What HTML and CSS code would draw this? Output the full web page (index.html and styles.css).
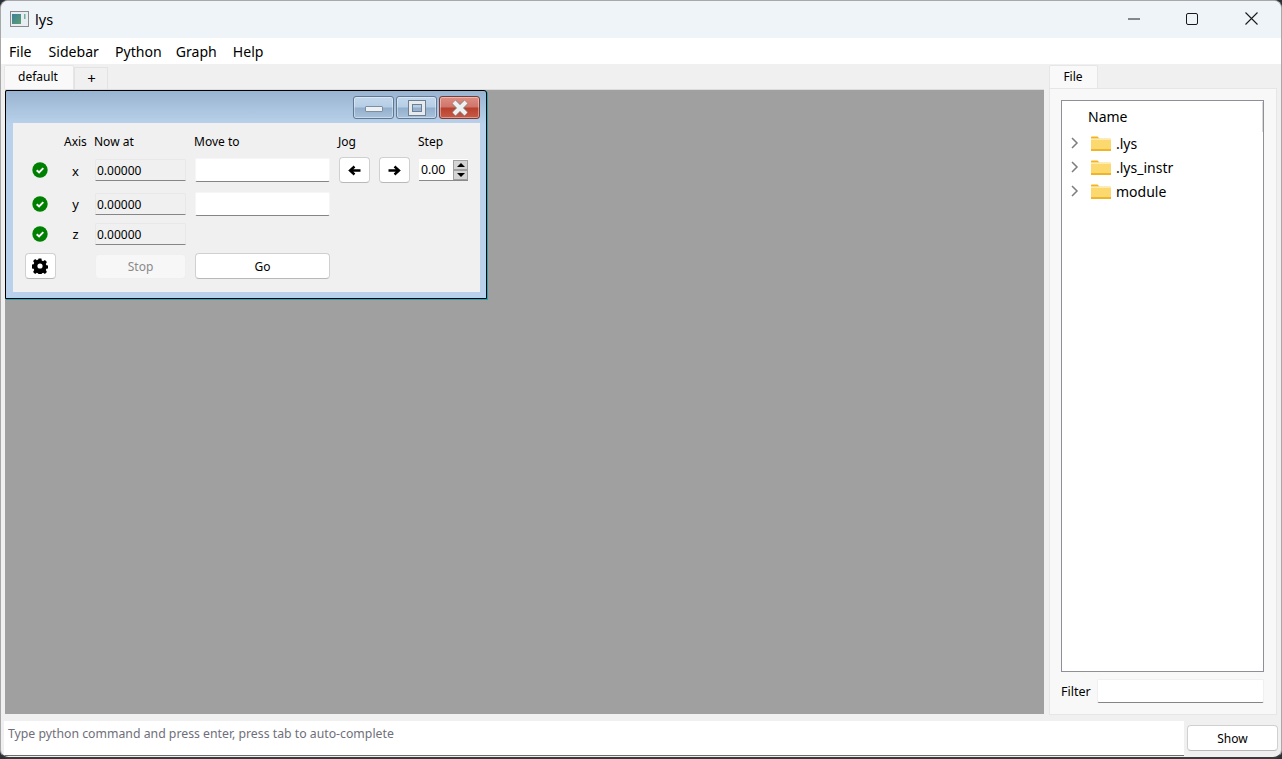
FILE: index.html
```html
<!DOCTYPE html>
<html lang="en">
<head>
<meta charset="utf-8">
<title>lys</title>
<link rel="stylesheet" href="styles.css">
</head>
<body>
<svg class="defs" width="0" height="0">
  <symbol id="ok" viewBox="0 0 16 16"><circle cx="8" cy="8" r="7.7" fill="#008000"/><path d="M4.7 8.200l2.400 2.300 4.200-4.400" fill="none" stroke="#fff" stroke-width="1.900"/></symbol>
  <symbol id="folder" viewBox="0 0 20 15"><path d="M0 1.500Q0 .5 1 .5h5.500l2 2H0z" fill="#f5b21c"/><path d="M0 2.500h19q1 0 1 1V14H0z" fill="#fcd96f"/><path d="M0 3h20v1H0z" fill="#fdeab0"/><path d="M0 13h20v2H0z" fill="#f0b429"/></symbol>
  <symbol id="chev" viewBox="0 0 8 12"><path d="M1 1l5 5-5 5" fill="none" stroke="#7d7d7d" stroke-width="1.500"/></symbol>
</svg>
<div class="app">
  <header class="titlebar">
    <svg class="appicon" width="19" height="16" viewBox="0 0 19 16"><rect x=".5" y=".5" width="18" height="15" fill="#e8edf2" stroke="#8a8a8a"/><defs><linearGradient id="lg" x1="0" y1="0" x2="1" y2="1"><stop offset="0" stop-color="#3d7fa0"/><stop offset="1" stop-color="#5ba06c"/></linearGradient></defs><rect x="2" y="3" width="9" height="10" fill="url(#lg)"/><rect x="14" y="3" width="1.500" height="5" fill="#6fb0a0"/></svg>
    <span class="apptitle">lys</span>
    <div class="wincontrols">
      <svg width="12" height="2" viewBox="0 0 12 2" class="wc-min"><path d="M0 1h12" stroke="#1a1a1a" stroke-width="1"/></svg>
      <svg width="12" height="12" viewBox="0 0 12 12" class="wc-max"><rect x=".5" y=".5" width="11" height="11" rx="1.500" fill="none" stroke="#1a1a1a"/></svg>
      <svg width="13" height="13" viewBox="0 0 13 13" class="wc-close"><path d="M.5.500l12 12M12.500.500l-12 12" stroke="#1a1a1a" stroke-width="1.100"/></svg>
    </div>
  </header>
  <nav class="menubar">
    <span class="menu m-file">File</span><span class="menu m-side">Sidebar</span><span class="menu m-py">Python</span><span class="menu m-graph">Graph</span><span class="menu m-help">Help</span>
  </nav>
  <main class="main">
    <section class="leftcol">
      <div class="tabs">
        <div class="tab tab-on">default</div>
        <div class="tab tab-plus">+</div>
      </div>
      <div class="mdi">
        <div class="subwin">
          <div class="subtitle">
            <div class="capbtn"><span class="glyph-min"></span></div>
            <div class="capbtn"><span class="glyph-max"></span></div>
            <div class="capbtn capclose"><svg width="20" height="16" viewBox="0 0 20 16"><path d="M4 2l12 12M16 2L4 14" stroke="#8a8a8a" stroke-width="5.500"/><path d="M4 2l12 12M16 2L4 14" stroke="#f0f0f0" stroke-width="4"/></svg></div>
          </div>
          <div class="subbody">
            <div class="grid">
              <div></div><div class="hd">Axis</div><div class="hd hd-now">Now at</div><div class="hd hd-move">Move to</div><div class="hd hd-jog">Jog</div><div class="hd">Step</div>

              <div class="cell c24 center"><svg class="okicon" width="16" height="16"><use href="#ok"/></svg></div>
              <div class="cell c24 center axis axis-x">x</div>
              <div class="cell c24"><div class="readout">0.00000</div></div>
              <div class="cell c24"><div class="edit"></div></div>
              <div class="cell c24 jog">
                <button class="btn jogbtn"><svg width="13" height="11" viewBox="0 0 13 11"><path d="M12.500 5.500H3.500M6.500 1.500L2 5.500 6.500 9.500" fill="none" stroke="#000" stroke-width="2.400"/></svg></button>
                <button class="btn jogbtn"><svg width="13" height="11" viewBox="0 0 13 11"><path d="M.5 5.500h9M6.500 1.500L11 5.500 6.500 9.500" fill="none" stroke="#000" stroke-width="2.400"/></svg></button>
              </div>
              <div class="cell c24"><div class="spin"><span class="spinval">0.00</span><span class="spinbtns"><span class="sb"><i class="up"></i></span><span class="sb"><i class="dn"></i></span></span></div></div>

              <div class="cell c24 center"><svg class="okicon" width="16" height="16"><use href="#ok"/></svg></div>
              <div class="cell c24 center axis">y</div>
              <div class="cell c24"><div class="readout">0.00000</div></div>
              <div class="cell c24"><div class="edit"></div></div>
              <div></div><div></div>

              <div class="cell c22 center"><svg class="okicon" width="16" height="16"><use href="#ok"/></svg></div>
              <div class="cell c22 center axis">z</div>
              <div class="cell c22"><div class="readout">0.00000</div></div>
              <div></div><div></div><div></div>

              <button class="btn gear"><svg class="gearicon" width="16" height="16" viewBox="0 0 16 16"><path fill="#000" fill-rule="evenodd" d="M6.600.6h2.800l.4 2 1.300.6 1.800-1.100 2 2-1.100 1.800.6 1.300 2 .4v2.800l-2 .4-.6 1.300 1.100 1.800-2 2-1.800-1.100-1.300.6-.4 2H6.600l-.4-2-1.300-.6-1.800 1.100-2-2 1.100-1.800-.6-1.300-2-.4V6.600l2-.4.6-1.300L1.100 3.100l2-2 1.800 1.100 1.300-.6zM8 5.400a2.600 2.600 0 1 0 0 5.200 2.600 2.600 0 0 0 0-5.200z"/></svg></button>
              <div></div>
              <div class="cell c26"><button class="btn stop" disabled>Stop</button></div>
              <div class="cell c26"><button class="btn go">Go</button></div>
              <div></div><div></div>
            </div>
          </div>
        </div>
      </div>
    </section>
    <aside class="rightcol">
      <div class="rtabs"><div class="rtab">File</div></div>
      <div class="pane">
        <div class="tree">
          <div class="treehead">Name</div>
          <div class="thumb"></div>
          <div class="row"><svg class="chev" width="8" height="12"><use href="#chev"/></svg><svg class="folder" width="20" height="15"><use href="#folder"/></svg><span>.lys</span></div>
          <div class="row"><svg class="chev" width="8" height="12"><use href="#chev"/></svg><svg class="folder" width="20" height="15"><use href="#folder"/></svg><span>.lys_instr</span></div>
          <div class="row"><svg class="chev" width="8" height="12"><use href="#chev"/></svg><svg class="folder" width="20" height="15"><use href="#folder"/></svg><span>module</span></div>
        </div>
        <div class="filter"><span class="filterlabel">Filter</span><div class="filteredit"></div></div>
      </div>
    </aside>
  </main>
  <footer class="bottom">
    <div class="cmd">Type python command and press enter, press tab to auto-complete</div>
    <button class="btn show">Show</button>
  </footer>
</div>
</body>
</html>
```
FILE: styles.css
```css
* { box-sizing: border-box; }
html, body { margin: 0; padding: 0; }
body { width: 1282px; height: 759px; overflow: hidden; background: #2b3136; font-family: "Noto Sans", sans-serif; font-size: 12px; color: #000; }
.defs { position: absolute; }
button { font: inherit; color: inherit; margin: 0; padding: 0; }
.app { width: 1282px; height: 759px; display: flex; flex-direction: column; background: #f0f0f0; border: 1px solid #a8a8a8; border-bottom: 2px solid #3a3a3a; border-radius: 8px 8px 9px 9px; overflow: hidden; }

.titlebar { height: 37px; flex: none; display: flex; align-items: center; background: #eff4f9; padding: 0 0 2px 9px; }
.apptitle { margin-left: 6px; font-size: 14.500px; }
.wincontrols { margin-left: auto; display: flex; align-items: center; }
.wc-min { margin-right: 46px; }
.wc-max { margin-right: 47px; }
.wc-close { margin-right: 23px; }

.menubar { height: 26px; flex: none; display: flex; align-items: center; background: #fff; font-size: 14.100px; padding-left: 8px; }
.m-file { margin-right: 17px; }
.m-side { margin-right: 16px; }
.m-py { margin-right: 14px; }
.m-graph { margin-right: 16px; }

.main { height: 652px; flex: none; display: flex; }
.leftcol { width: 1039px; margin-left: 4px; display: flex; flex-direction: column; }
.tabs { height: 25px; flex: none; display: flex; align-items: flex-end; margin-left: -1px; }
.tab { display: flex; align-items: center; justify-content: center; }
.tab-on { width: 70px; height: 24px; background: #f9f9f9; border: 1px solid #e6e6e6; border-bottom: 0; border-radius: 2px 2px 0 0; padding: 0 2px 2px 0; }
.tab-plus { width: 34px; height: 22px; border: 1px solid #e3e3e3; border-bottom: 0; font-size: 15px; line-height: 1; padding: 0 0 1px 1px; }
.mdi { height: 625px; background: #a0a0a0; position: relative; border-top: 1px solid #dcdcdc; }

.subwin { position: absolute; left: 0; top: 0; width: 482px; height: 209px; display: flex; flex-direction: column; background: linear-gradient(#99b4d1, #b9d1ea 33px); border: 1px solid #000; box-shadow: 1px 1px 0 #1aa9bb; border-radius: 2px 3px 0 0; padding: 0 6px 5px 7px; }
.subtitle { height: 32px; flex: none; display: flex; justify-content: flex-end; gap: 2px; padding: 5px 0 0; }
.capbtn { width: 41px; height: 23px; border: 1px solid #5f7995; border-radius: 3px; background: linear-gradient(#c4d8ec 0, #b5cde5 48%, #93aecb 52%, #a8c2dc 100%); box-shadow: inset 0 0 0 1px rgba(255,255,255,.4); display: flex; align-items: center; justify-content: center; }
.capclose { background: linear-gradient(#dc8e83 0, #d0746a 48%, #b8402c 52%, #c85a48 100%); border-color: #7a3b35; }
.glyph-min { width: 18px; height: 6px; margin-top: 3px; background: #eef0f2; border: 1px solid #7c8ea2; border-radius: 1px; }
.glyph-max { width: 16px; height: 14px; background: transparent; border: 3px solid #e8eaec; outline: 1px solid #6c7f94; box-shadow: inset 0 0 0 1px #6c7f94; }
.subbody { width: 467px; height: 169px; background: #f0f0f0; padding: 10px 0 0 12px; }
.grid { display: grid; grid-template-columns: 31px 23px 92px 135px 72px 50px; column-gap: 8px; grid-template-rows: 25px 34px 31px 30px 26px; align-items: start; }
.hd { line-height: 17px; white-space: nowrap; }
.hd-now { margin-left: -1px; }
.hd-move { margin-left: -1px; }
.cell { display: flex; align-items: center; }
.c24 { height: 24px; }
.c22 { height: 22px; }
.c26 { height: 26px; }
.center { justify-content: center; }
.axis { font-size: 13px; }
.axis-x { padding-top: 2px; }
.okicon { margin-left: -2px; }
.readout { width: 91px; height: 22px; background: #f0f0f0; border: 1px solid #e8e8e8; border-bottom: 1px solid #868686; border-radius: 2px 2px 0 0; padding-left: 1px; display: flex; align-items: center; }
.edit { width: 135px; height: 24px; background: #fff; border: 1px solid #f6f6f6; border-bottom: 1px solid #858585; border-radius: 2px; }
.btn { background: #fff; border: 1px solid #d0d0d0; border-bottom-color: #b8b8b8; border-radius: 4px; display: flex; align-items: center; justify-content: center; }
.jog { gap: 9px; padding-left: 1px; }
.jogbtn { width: 31px; height: 26px; }
.spin { width: 49px; height: 22px; margin-left: 1px; display: flex; background: #fff; border-bottom: 1px solid #8a8a8a; padding-left: 2px; }
.spinval { width: 32px; line-height: 22px; font-size: 12.300px; }
.spinbtns { width: 15px; margin-top: 1px; display: flex; flex-direction: column; }
.sb { height: 10px; background: #d4d4d4; border: 1px solid #a0a0a0; display: flex; align-items: center; justify-content: center; }
.up, .dn { display: block; width: 0; height: 0; border-left: 4px solid transparent; border-right: 4px solid transparent; }
.up { border-bottom: 4px solid #000; }
.dn { border-top: 4px solid #000; }
.gear { width: 31px; height: 26px; }
.gearicon { margin-left: -2px; }
.stop { width: 91px; height: 25px; background: #f7f7f7; border-color: #efefef; color: #8a8a8a; }
.go { width: 135px; height: 26px; }

.rightcol { width: 228px; margin-left: 5px; display: flex; flex-direction: column; }
.rtabs { height: 24px; flex: none; display: flex; align-items: flex-end; }
.rtab { width: 49px; height: 23px; background: #f9f9f9; border: 1px solid #e6e6e6; border-bottom: 0; border-radius: 2px 2px 0 0; display: flex; align-items: center; justify-content: center; padding: 0 1px 2px 0; }
.pane { height: 627px; background: #f8f8f8; border: 1px solid #e6e6e6; padding: 11px 12px 0 11px; display: flex; flex-direction: column; }
.tree { width: 203px; height: 572px; flex: none; background: #fff; border: 1px solid #8f8f97; position: relative; font-size: 14px; }
.treehead { height: 30px; padding: 6px 0 0 26px; line-height: 20px; }
.thumb { position: absolute; right: 0; top: 1px; width: 1px; height: 30px; background: #d8d8d8; }
.row { height: 24px; display: flex; align-items: center; padding-left: 9px; }
.chev { flex: none; }
.folder { flex: none; margin-left: 12px; }
.row span { margin-left: 5px; }
.filter { display: flex; align-items: center; margin-top: 7px; }
.filterlabel { width: 36px; font-size: 12.500px; }
.filteredit { width: 167px; height: 24px; background: #fff; border: 1px solid #f0f0f0; border-bottom: 1px solid #858585; border-radius: 2px; }

.bottom { height: 40px; flex: none; display: flex; padding: 5px 0 0 3px; }
.cmd { width: 1180px; height: 35px; background: #fff; border-bottom: 1px solid #6e6e6e; color: #6f6f7a; padding: 5px 0 0 4px; line-height: 16px; font-size: 12.280px; white-space: nowrap; }
.show { width: 91px; height: 26px; margin: 4px 0 0 3px; }
```
